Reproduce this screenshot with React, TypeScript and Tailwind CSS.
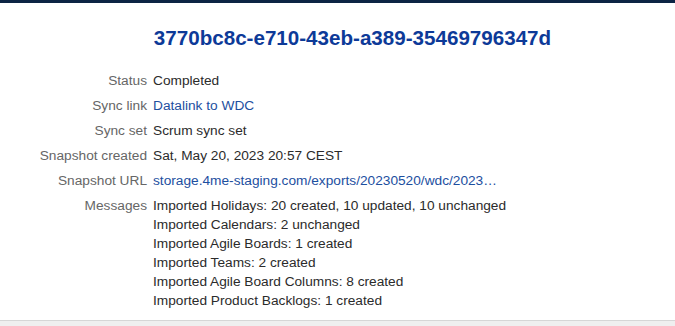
const rows: { label: string; value: string; link?: boolean; truncate?: boolean }[] = [
  { label: "Status", value: "Completed" },
  { label: "Sync link", value: "Datalink to WDC", link: true },
  { label: "Sync set", value: "Scrum sync set" },
  { label: "Snapshot created", value: "Sat, May 20, 2023 20:57 CEST" },
  {
    label: "Snapshot URL",
    value: "storage.4me-staging.com/exports/20230520/wdc/20230520T185700_snapshot.json",
    link: true,
    truncate: true,
  },
];

const messages = [
  "Imported Holidays: 20 created, 10 updated, 10 unchanged",
  "Imported Calendars: 2 unchanged",
  "Imported Agile Boards: 1 created",
  "Imported Teams: 2 created",
  "Imported Agile Board Columns: 8 created",
  "Imported Product Backlogs: 1 created",
];

export default function App() {
  return (
    <div className="w-[675px] h-[326px] overflow-hidden bg-[#efefef] font-['Liberation_Sans',Arial,sans-serif]">
      <div className="h-[3px] bg-[#0c2444]" />
      <div className="bg-white pt-[22px] pb-[10px] border-b border-[#d6d6d6]">
        <h1 className="text-center pl-[30px] text-[20.6px] leading-[26px] font-bold text-[#0d3a98]">
          3770bc8c-e710-43eb-a389-35469796347d
        </h1>
        <div className="mt-[18px] text-[13.7px]">
          {rows.map((r) => (
            <div key={r.label} className="flex h-[25px] items-center">
              <div className="w-[147px] shrink-0 text-right text-[#666]">{r.label}</div>
              <div
                className={`ml-[6px] ${r.link ? "text-[#1d4f9f]" : "text-[#2b2b2b]"} ${
                  r.truncate ? "w-[345px] truncate" : ""
                }`}
              >
                {r.value}
              </div>
            </div>
          ))}
          <div className="flex pt-[2px]">
            <div className="w-[147px] shrink-0 text-right text-[#666] leading-[19px]">Messages</div>
            <div className="ml-[6px] text-[#2b2b2b] leading-[19px]">
              {messages.map((m) => (
                <div key={m}>{m}</div>
              ))}
            </div>
          </div>
        </div>
      </div>
    </div>
  );
}
